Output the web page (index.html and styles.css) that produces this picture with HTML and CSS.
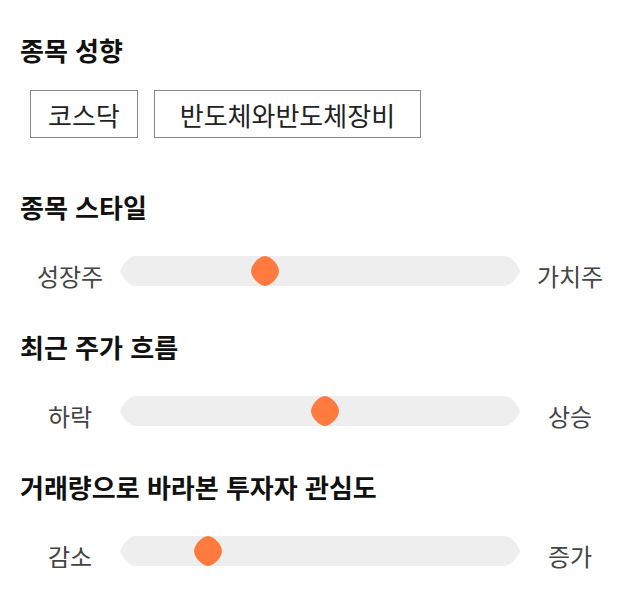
FILE: index.html
```html
<!DOCTYPE html>
<html lang="ko">
<head>
<meta charset="utf-8">
<link rel="stylesheet" href="styles.css">
</head>
<body>
<main class="page">
  <section class="section section-chips">
    <h2 class="title">종목 성향</h2>
    <div class="chips">
      <span class="chip">코스닥</span>
      <span class="chip chip-wide">반도체와반도체장비</span>
    </div>
  </section>

  <section class="section">
    <h2 class="title">종목 스타일</h2>
    <div class="slider-row">
      <span class="label">성장주</span>
      <div class="track">
        <svg class="track-bg" viewBox="0 0 400 30" preserveAspectRatio="none"><path d="M16,0 H384 C391,0 397,8 400,15 C397,22 391,30 384,30 H16 C9,30 3,22 0,15 C3,8 9,0 16,0 Z"/></svg>
        <svg class="thumb" style="left: calc((100% - 28px) * 0.351)" viewBox="0 0 28 30"><path d="M14,0 C20,0 28,9 28,15 C28,21 20,30 14,30 C8,30 0,21 0,15 C0,9 8,0 14,0 Z"/></svg>
      </div>
      <span class="label">가치주</span>
    </div>
  </section>

  <section class="section">
    <h2 class="title">최근 주가 흐름</h2>
    <div class="slider-row">
      <span class="label">하락</span>
      <div class="track">
        <svg class="track-bg" viewBox="0 0 400 30" preserveAspectRatio="none"><path d="M16,0 H384 C391,0 397,8 400,15 C397,22 391,30 384,30 H16 C9,30 3,22 0,15 C3,8 9,0 16,0 Z"/></svg>
        <svg class="thumb" style="left: calc((100% - 28px) * 0.513)" viewBox="0 0 28 30"><path d="M14,0 C20,0 28,9 28,15 C28,21 20,30 14,30 C8,30 0,21 0,15 C0,9 8,0 14,0 Z"/></svg>
      </div>
      <span class="label">상승</span>
    </div>
  </section>

  <section class="section">
    <h2 class="title">거래량으로 바라본 투자자 관심도</h2>
    <div class="slider-row">
      <span class="label">감소</span>
      <div class="track">
        <svg class="track-bg" viewBox="0 0 400 30" preserveAspectRatio="none"><path d="M16,0 H384 C391,0 397,8 400,15 C397,22 391,30 384,30 H16 C9,30 3,22 0,15 C3,8 9,0 16,0 Z"/></svg>
        <svg class="thumb" style="left: calc((100% - 28px) * 0.199)" viewBox="0 0 28 30"><path d="M14,0 C20,0 28,9 28,15 C28,21 20,30 14,30 C8,30 0,21 0,15 C0,9 8,0 14,0 Z"/></svg>
      </div>
      <span class="label">증가</span>
    </div>
  </section>
</main>
</body>
</html>
```

FILE: styles.css
```css
html, body {
  margin: 0;
  padding: 0;
  background: #ffffff;
}

body {
  font-family: "Noto Sans CJK KR", "Noto Sans", sans-serif;
  color: #111111;
}

.page {
  padding: 34px 20px 0 20px;
  display: flex;
  flex-direction: column;
  gap: 40px;
}

.section {
  display: flex;
  flex-direction: column;
}

.section-chips {
  padding-bottom: 13px;
}

.title {
  margin: 0;
  font-size: 26px;
  line-height: 32px;
  font-weight: 700;
  color: #111111;
}

.chips {
  display: flex;
  gap: 16px;
  margin-top: 24px;
  padding-left: 10px;
}

.chip {
  display: flex;
  align-items: center;
  height: 46px;
  padding: 0 17px;
  border: 1px solid #888888;
  font-size: 26px;
  color: #222222;
}

.chip-wide {
  padding: 0 25px;
}

.slider-row {
  display: grid;
  grid-template-columns: 100px 400px 100px;
  align-items: start;
  margin-top: 33px;
}

.label {
  text-align: center;
  font-size: 24px;
  line-height: 30px;
  padding-top: 5px;
  color: #444444;
}

.track {
  position: relative;
  height: 30px;
}

.track-bg {
  display: block;
  width: 100%;
  height: 30px;
  fill: #eeeeee;
}

.thumb {
  position: absolute;
  top: 0;
  width: 28px;
  height: 30px;
  fill: #ff7a3f;
}
```
